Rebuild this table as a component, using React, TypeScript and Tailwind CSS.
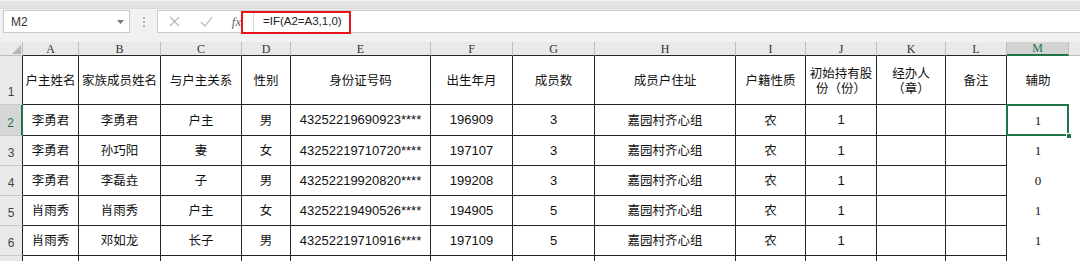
import React from 'react'

const CJK = { fontFamily: '"Noto Sans CJK SC", "Liberation Sans", sans-serif' }

const colW = [
  'w-[56px]', 'w-[82px]', 'w-[81px]', 'w-[49px]', 'w-[140px]', 'w-[82px]',
  'w-[82px]', 'w-[141px]', 'w-[70px]', 'w-[71px]', 'w-[69px]', 'w-[61px]',
]
const letters = ['A', 'B', 'C', 'D', 'E', 'F', 'G', 'H', 'I', 'J', 'K', 'L']

const header: React.ReactNode[] = [
  '户主姓名', '家族成员姓名', '与户主关系', '性别', '身份证号码', '出生年月', '成员数',
  '成员户住址', '户籍性质',
  <div className="flex flex-col items-center">
    <span className="h-[15px] leading-[15px]">初始持有股</span>
    <span className="h-[15px] leading-[15px]">份（份）</span>
  </div>,
  <div className="flex flex-col items-center">
    <span className="h-[15px] leading-[15px]">经办人</span>
    <span className="h-[15px] leading-[15px]">（章）</span>
  </div>,
  '备注',
]

const rows: string[][] = [
  ['李勇君', '李勇君', '户主', '男', '43252219690923****', '196909', '3', '嘉园村齐心组', '农', '1', '', '', '1'],
  ['李勇君', '孙巧阳', '妻', '女', '43252219710720****', '197107', '3', '嘉园村齐心组', '农', '1', '', '', '1'],
  ['李勇君', '李磊垚', '子', '男', '43252219920820****', '199208', '3', '嘉园村齐心组', '农', '1', '', '', '0'],
  ['肖雨秀', '肖雨秀', '户主', '女', '43252219490526****', '194905', '5', '嘉园村齐心组', '农', '1', '', '', '1'],
  ['肖雨秀', '邓如龙', '长子', '男', '43252219710916****', '197109', '5', '嘉园村齐心组', '农', '1', '', '', '1'],
  ['', '', '', '', '', '', '', '', '', '', '', '', ''],
]
const rowH = ['h-[31px]', 'h-[30px]', 'h-[30px]', 'h-[30px]', 'h-[30px]', 'h-[30px]']

function RowHead({ n, h, active }: { n?: number; h: string; active?: boolean }) {
  return (
    <div
      className={`${h} w-[23px] shrink-0 flex items-end justify-center pb-[3px] border-b border-[#c9c9c9] text-[12px] ${
        active
          ? 'bg-[#d6d6d6] text-[#217346] border-r-2 border-r-[#217346]'
          : 'bg-[#e9e9e9] text-[#444] border-r border-r-[#262626]'
      }`}
      style={{ fontFamily: '"Liberation Sans", sans-serif' }}
    >
      {n}
    </div>
  )
}

function Cell({ w, children, num }: { w: string; children?: React.ReactNode; num?: boolean }) {
  return (
    <div
      className={`${w} shrink-0 h-full flex items-center justify-center text-center border-r border-b border-[#262626] text-[#111] ${
        num ? 'text-[13px]' : 'text-[12.5px]'
      }`}
      style={num ? { fontFamily: '"Liberation Sans", sans-serif' } : CJK}
    >
      {children}
    </div>
  )
}

const isNum = (s: string) => /^[0-9*]+$/.test(s)

export default function App() {
  return (
    <div className="relative w-[1080px] h-[261px] overflow-hidden bg-white select-none">
      {/* formula bar */}
      <div className="bg-[#f1f1f1]">
        <div className="h-[9px] bg-[#e2e2e2] border-t border-[#f3f3f3] border-b border-b-[#d9d9d9]" />
        <div className="h-[24px] flex items-start pt-[1px]">
          <div className="ml-[3px] w-[127px] h-[23px] bg-white border border-[#c9c9c9] flex items-center justify-between pl-[7px] pr-[5px]">
            <span className="text-[12px] text-[#333]" style={{ fontFamily: '"Liberation Sans", sans-serif' }}>M2</span>
            <svg width="7" height="4" viewBox="0 0 7 4"><path d="M0 0h7L3.5 4z" fill="#7a7a7a" /></svg>
          </div>
          <div className="w-[27px] h-[23px] flex flex-col items-center justify-center gap-[2px]">
            <span className="w-[2px] h-[2px] bg-[#b5b5b5]" />
            <span className="w-[2px] h-[2px] bg-[#b5b5b5]" />
            <span className="w-[2px] h-[2px] bg-[#b5b5b5]" />
          </div>
          <div className="flex-1 h-[23px] bg-white border border-r-0 border-[#c9c9c9] flex items-center">
            <div className="w-[95px] flex items-center">
              <div className="w-[32px] flex justify-center">
                <svg width="11" height="11" viewBox="0 0 11 11"><path d="M1 1l9 9M10 1l-9 9" stroke="#b8b8b8" strokeWidth="1.2" /></svg>
              </div>
              <div className="w-[32px] flex justify-center">
                <svg width="13" height="11" viewBox="0 0 13 11"><path d="M1 6l4 4 7-9" stroke="#b8b8b8" strokeWidth="1.2" fill="none" /></svg>
              </div>
              <div className="w-[31px] flex justify-center">
                <span className="italic text-[13px] text-[#666] pr-[2px]" style={{ fontFamily: '"Liberation Serif", serif' }}>fx</span>
              </div>
            </div>
            <div className="h-full border-l border-[#dadada] pl-[9px] flex items-center">
              <span className="text-[11.5px] text-[#222]" style={{ fontFamily: '"Liberation Sans", sans-serif' }}>=IF(A2=A3,1,0)</span>
            </div>
          </div>
        </div>
        <div className="h-[9px]" />
      </div>

      {/* column headers */}
      <div className="flex h-[14px]">
        <div className="w-[23px] shrink-0 bg-[#e9e9e9] border-r border-b border-[#bdbdbd] flex items-end justify-end p-[1px]">
          <svg width="9" height="9" viewBox="0 0 9 9"><path d="M9 0v9H0z" fill="#b7b7b7" /></svg>
        </div>
        {letters.map((l, i) => (
          <div
            key={l}
            className={`${colW[i]} shrink-0 bg-[#e9e9e9] border-r border-r-[#bdbdbd] border-b border-b-[#262626] flex items-center justify-center text-[12px] text-[#333] leading-none`}
            style={{ fontFamily: '"Liberation Serif", serif' }}
          >
            {l}
          </div>
        ))}
        <div
          className="w-[62px] shrink-0 bg-[#d3d3d3] border-r border-r-[#bdbdbd] border-b-2 border-b-[#217346] flex items-center justify-center text-[12px] text-[#217346] leading-none"
          style={{ fontFamily: '"Liberation Serif", serif' }}
        >
          M
        </div>
        <div className="flex-1 bg-[#e9e9e9] border-b border-[#bdbdbd]" />
      </div>

      {/* row 1 */}
      <div className="flex h-[49px]">
        <RowHead n={1} h="h-[49px]" />
        {header.map((c, i) => (
          <Cell key={i} w={colW[i]}>{c}</Cell>
        ))}
        <div className="w-[62px] shrink-0 flex items-center justify-center text-[12.5px] text-[#111]" style={CJK}>辅助</div>
        <div className="flex-1" />
      </div>

      {/* data rows */}
      {rows.map((r, ri) => (
        <div key={ri} className={`flex ${rowH[ri]}`}>
          <RowHead n={ri < 5 ? ri + 2 : undefined} h={rowH[ri]} active={ri === 0} />
          {r.slice(0, 12).map((c, ci) => (
            <Cell key={ci} w={colW[ci]} num={isNum(c)}>{c}</Cell>
          ))}
          <div
            className="relative w-[62px] shrink-0 flex items-center justify-center text-[13px] text-[#111]"
            style={{ fontFamily: '"Liberation Serif", serif' }}
          >
            {r[12]}
            {ri === 0 && (
              <>
                <div className="absolute -left-[1px] -top-[1px] right-0 bottom-0 border-2 border-[#217346]" />
                <div className="absolute -right-[3px] -bottom-[3px] w-[6px] h-[6px] bg-[#217346] border border-white" />
              </>
            )}
          </div>
          <div className="flex-1" />
        </div>
      ))}

      {/* annotation */}
      <div className="absolute left-[241px] top-[11px] w-[110px] h-[23px] border-2 border-[#e8161b]" />
    </div>
  )
}
